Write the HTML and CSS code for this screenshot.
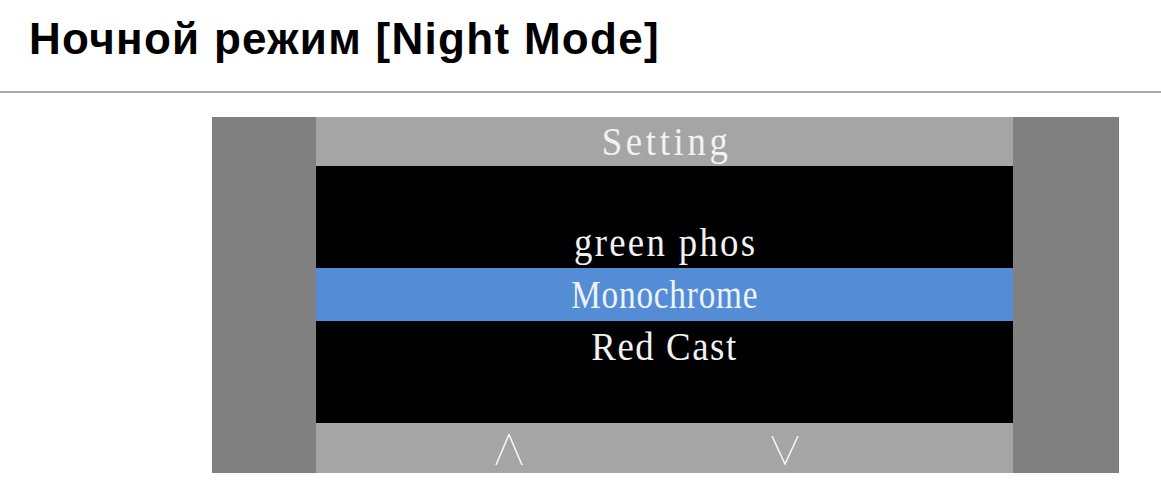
FILE: index.html
```html
<!DOCTYPE html>
<html lang="ru">
<head>
<meta charset="utf-8">
<title>Ночной режим</title>
<link rel="stylesheet" href="styles.css">
</head>
<body>
<header class="page-head">
  <h1 class="title">Ночной режим [Night Mode]</h1>
</header>
<main class="content">
  <div class="screen">
    <div class="side"></div>
    <div class="panel">
      <div class="bar top-bar"><span class="lcd lcd-title">Setting</span></div>
      <div class="row"></div>
      <div class="row"><span class="lcd lcd-green">green phos</span></div>
      <div class="row selected"><span class="lcd lcd-mono">Monochrome</span></div>
      <div class="row"><span class="lcd lcd-red">Red Cast</span></div>
      <div class="row"></div>
      <div class="bar bottom-bar">
        <svg class="arrow" width="28" height="31" viewBox="0 0 28 31"><path d="M1 31 L14 0.5 L27 31" fill="none" stroke="#f4f4f4" stroke-width="1.6"/></svg>
        <svg class="arrow" width="28" height="31" viewBox="0 0 28 31"><path d="M1 2 L14 30 L27 2" fill="none" stroke="#f4f4f4" stroke-width="1.6"/></svg>
      </div>
    </div>
    <div class="side"></div>
  </div>
</main>
</body>
</html>
```

FILE: styles.css
```css
html, body {
  margin: 0;
  padding: 0;
  background: #ffffff;
}

.page-head {
  border-bottom: 2px solid #a9a9a9;
  padding: 11px 0 0 29px;
  box-sizing: border-box;
  height: 93px;
}

.title {
  margin: 0;
  font-family: "Liberation Sans", Arial, sans-serif;
  font-weight: bold;
  font-size: 44px;
  letter-spacing: 1.3px;
  line-height: 56px;
  color: #000;
}

.content {
  padding: 24px 0 0 212px;
}

.screen {
  display: flex;
  width: 907px;
  height: 356px;
}

.side {
  width: 104px;
  background: #808080;
}
.side:last-child {
  width: 106px;
}

.panel {
  width: 697px;
  display: flex;
  flex-direction: column;
  background: #000;
}

.bar {
  background: #a5a5a5;
}

.top-bar {
  height: 49px;
  text-align: center;
  line-height: 49px;
}

.row {
  height: 51px;
  line-height: 51px;
  text-align: center;
}

.row.selected {
  height: 53px;
  line-height: 53px;
  background: #548dd5;
}

.lcd {
  font-family: "Liberation Serif", "Times New Roman", serif;
  font-size: 40px;
  color: #f2f2f2;
  display: inline-block;
  white-space: pre;
  transform: scaleX(0.92);
  letter-spacing: 1px;
  vertical-align: -3px;
}

.lcd-title {
  letter-spacing: 4px;
  margin-left: 4px;
}

.lcd-green {
  letter-spacing: 2.5px;
  margin-left: 2px;
}

.lcd-mono {
  transform: scaleX(0.83);
  color: #eef3fb;
}

.lcd-red {
  letter-spacing: 1.7px;
}

.bottom-bar {
  height: 50px;
  display: flex;
  align-items: flex-start;
  gap: 248px;
  padding: 11px 0 0 179px;
  box-sizing: border-box;
}

.arrow {
  display: block;
}
```
